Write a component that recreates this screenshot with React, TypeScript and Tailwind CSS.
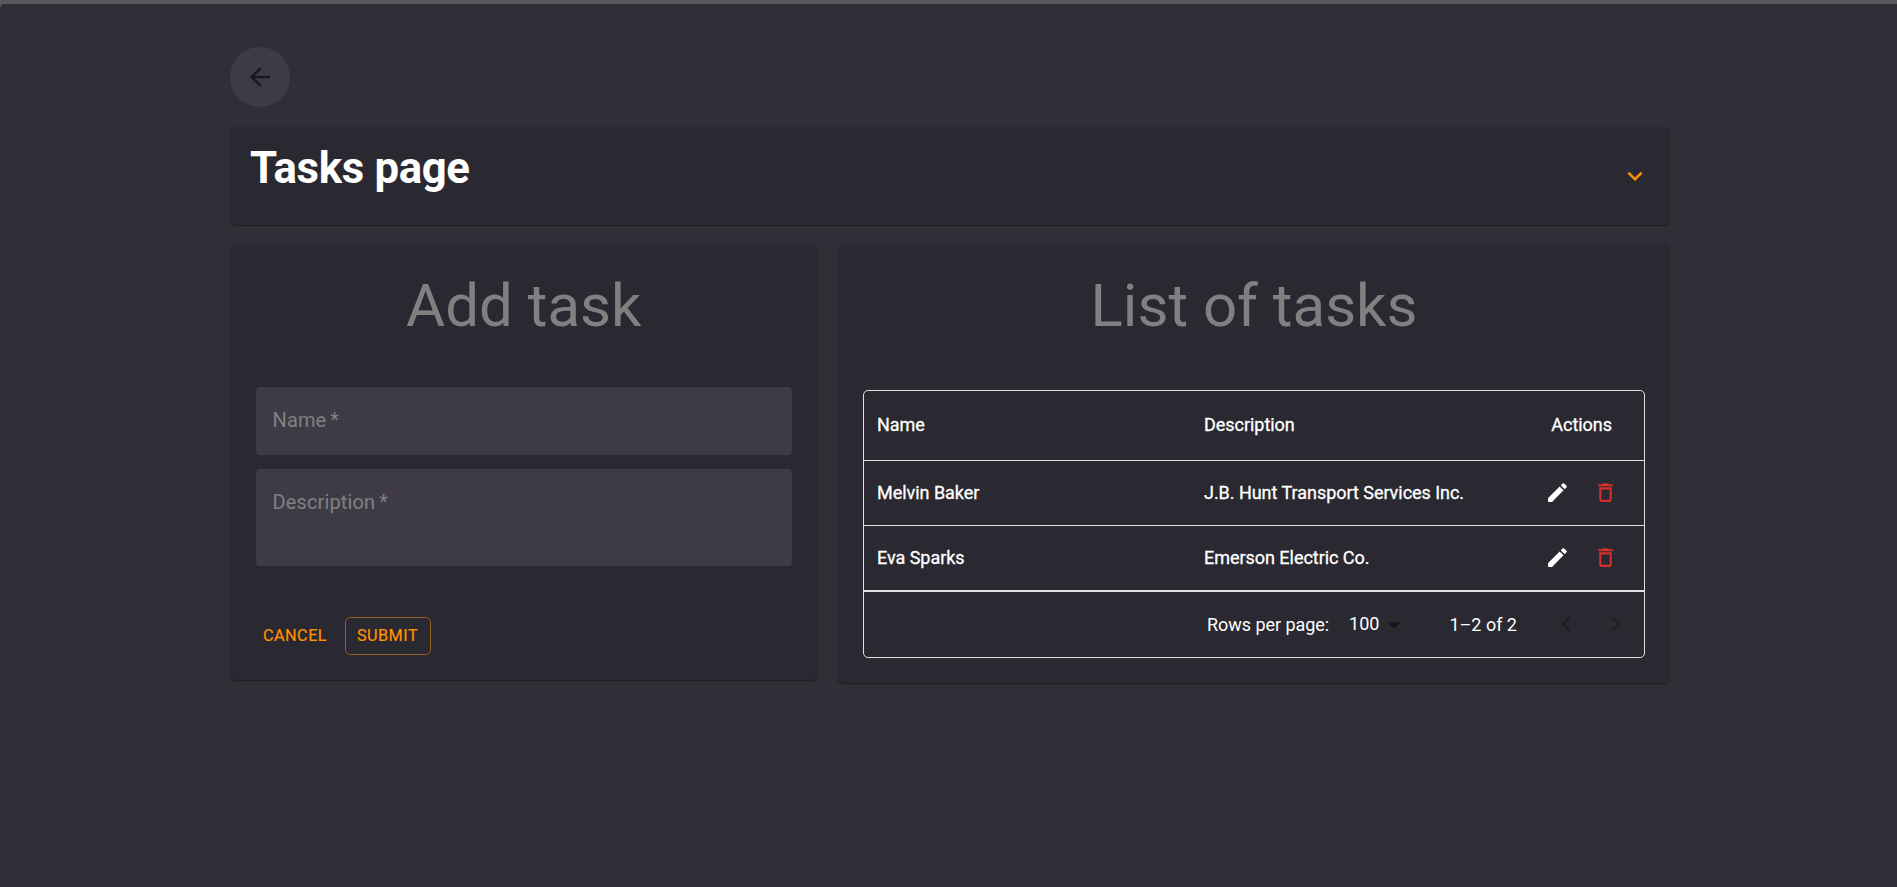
import React from "react";

function Icon({ d, className }: { d: string; className: string }) {
  return (
    <svg viewBox="0 0 24 24" fill="currentColor" className={`block shrink-0 ${className}`}>
      <path d={d} />
    </svg>
  );
}

const ARROW_BACK = "M20 11H7.83l5.59-5.59L12 4l-8 8 8 8 1.41-1.41L7.83 13H20v-2z";
const EXPAND_MORE = "M16.59 8.59 12 13.17 7.41 8.59 6 10l6 6 6-6z";
const EDIT =
  "M3 17.25V21h3.75L17.81 9.94l-3.75-3.75L3 17.25zM20.71 7.04c.39-.39.39-1.02 0-1.41l-2.34-2.34a.9959.9959 0 0 0-1.41 0l-1.83 1.83 3.75 3.75 1.83-1.83z";
const DELETE =
  "M6 19c0 1.1.9 2 2 2h8c1.1 0 2-.9 2-2V7H6v12zM8 9h8v10H8V9zm7.5-5-1-1h-5l-1 1H5v2h14V4z";
const DROP_DOWN = "M7 10l5 5 5-5z";
const CHEVRON_LEFT = "M15.41 7.41L14 6l-6 6 6 6 1.41-1.41L10.83 12z";
const CHEVRON_RIGHT = "M10 6L8.59 7.41 13.17 12l-4.58 4.59L10 18l6-6z";

const tasks = [
  { name: "Melvin Baker", description: "J.B. Hunt Transport Services Inc." },
  { name: "Eva Sparks", description: "Emerson Electric Co." },
];

const card =
  "rounded-[5px] bg-[#2a2830] shadow-[0_2px_1px_-1px_rgba(0,0,0,0.2),0_1px_1px_0_rgba(0,0,0,0.14),0_1px_3px_0_rgba(0,0,0,0.12)]";

const cellText = "tracking-[-0.035px] [-webkit-text-stroke:0.3px_currentColor]";

function Field({ label, className }: { label: string; className: string }) {
  return (
    <div
      className={`rounded-[4px] bg-[#3f3b46] pl-[17px] pt-[22px] text-[20px] leading-[23px] tracking-[0.12px] text-[#808080] [word-spacing:-1px] ${className}`}
    >
      {label}
    </div>
  );
}

function TaskTable() {
  return (
    <div className="flex h-[268px] flex-col rounded-[5px] border border-[#e0e0e0] text-[18px] text-white">
      <div className={`flex h-[70px] items-center border-b border-[#e0e0e0] pb-[2px] pl-[13px] ${cellText}`}>
        <span className="w-[327px]">Name</span>
        <span className="flex-1">Description</span>
        <span className="pr-[32px]">Actions</span>
      </div>
      {tasks.map((t) => (
        <div
          key={t.name}
          className={`flex h-[65px] items-center border-b border-[#e0e0e0] pb-[2px] pl-[13px] ${cellText}`}
        >
          <span className="w-[327px]">{t.name}</span>
          <span className="flex-1">{t.description}</span>
          <div className="flex gap-[23px] pr-[26px]">
            <Icon d={EDIT} className="size-[25px] text-white" />
            <Icon d={DELETE} className="size-[25px] text-[#d32f2f]" />
          </div>
        </div>
      ))}
      <div className="flex flex-1 items-center justify-end border-t border-[#e0e0e0] pr-[13px]">
        <span className="tracking-[-0.06px]">Rows per page:</span>
        <span className="ml-[20px] pb-[2px]">100</span>
        <Icon d={DROP_DOWN} className="size-[30px] text-[#151419]" />
        <span className="ml-[40px]">1–2 of 2</span>
        <Icon d={CHEVRON_LEFT} className="mb-[2px] ml-[34px] size-[30px] text-[#1f1d23]" />
        <Icon d={CHEVRON_RIGHT} className="mb-[2px] ml-[20px] size-[30px] text-[#1f1d23]" />
      </div>
    </div>
  );
}

export default function App() {
  return (
    <div className="h-[887px] overflow-hidden bg-[#56595c] pt-[4px] font-[Roboto,sans-serif]">
      <div className="h-full rounded-tl-[5px] bg-[#322e37] pl-[230px] pt-[43px]">
        <div className="flex w-[1439.5px] flex-col">
          <button className="flex size-[60px] items-center justify-center rounded-full bg-[#3f3b46] text-[#1a181d]">
            <Icon d={ARROW_BACK} className="size-[30px]" />
          </button>

          <header className={`mt-[20px] flex h-[98px] items-center justify-between pl-[20px] pr-[19.5px] ${card}`}>
            <h1 className="pb-[16px] text-[43.75px] font-bold leading-[50px] tracking-[-0.35px] text-white">Tasks page</h1>
            <Icon d={EXPAND_MORE} className="mb-[1px] size-[30px] text-[#ff9100]" />
          </header>

          <main className="mt-[20px] flex items-start justify-between">
            <section className={`h-[435px] w-[587.5px] px-[25.5px] ${card}`}>
              <h2 className="pt-[25px] text-center text-[60px] leading-[72px] text-[#808080]">Add task</h2>
              <Field label="Name *" className="mt-[45px] h-[68px]" />
              <Field label="Description *" className="mt-[14px] h-[97px]" />
              <div className="mt-[51px] flex items-center text-[16.25px] tracking-[0.47px] text-[#ff9100] [-webkit-text-stroke:0.2px_currentColor]">
                <button className="h-[38px] w-[79px] text-center">CANCEL</button>
                <button className="ml-[10px] h-[38px] w-[86px] rounded-[5px] border border-[#956024]">SUBMIT</button>
              </div>
            </section>

            <section className={`h-[438px] w-[831.5px] pl-[25px] pr-[24.5px] ${card}`}>
              <h2 className="pt-[25px] text-center text-[60px] leading-[72px] text-[#808080]">List of tasks</h2>
              <div className="mt-[48px]">
                <TaskTable />
              </div>
            </section>
          </main>
        </div>
      </div>
    </div>
  );
}
